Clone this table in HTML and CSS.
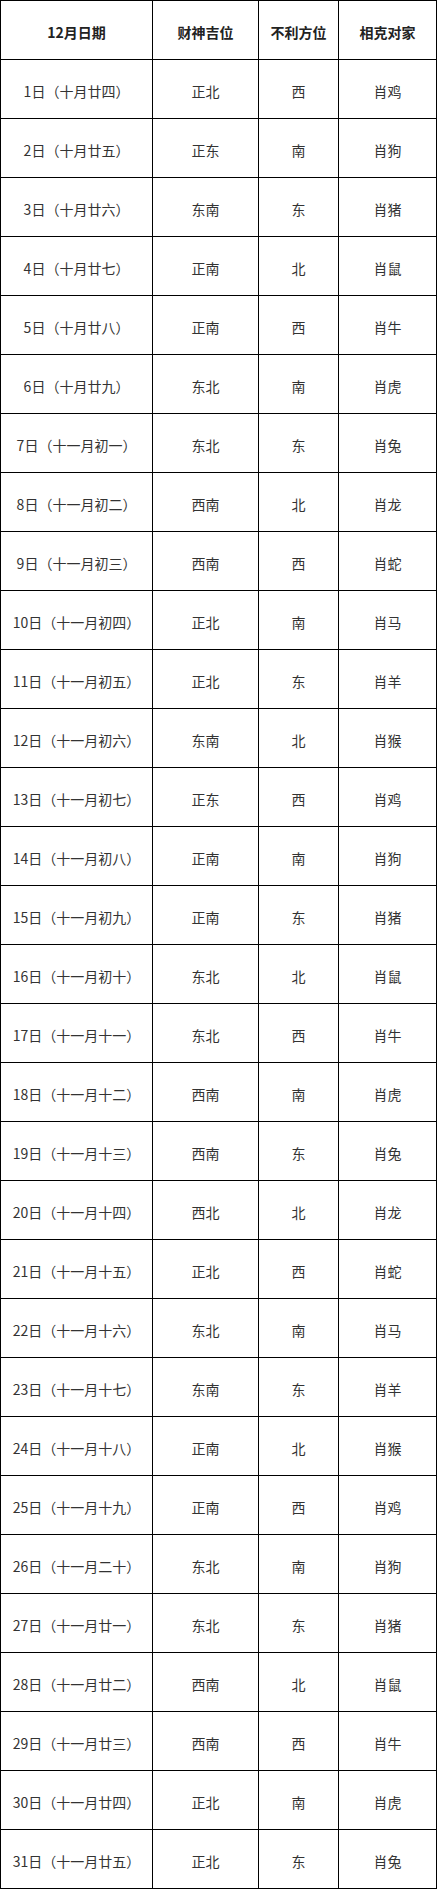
FILE: index.html
```html
<!DOCTYPE html>
<html lang="zh-CN">
<head>
<meta charset="utf-8">
<title>12月日期</title>
<link rel="stylesheet" href="styles.css">
</head>
<body>
<table class="almanac">
<colgroup>
<col class="c1"><col class="c2"><col class="c3"><col class="c4">
</colgroup>
<thead>
<tr><th>12月日期</th><th>财神吉位</th><th>不利方位</th><th>相克对家</th></tr>
</thead>
<tbody>
<tr><td>1日（十月廿四）</td><td>正北</td><td>西</td><td>肖鸡</td></tr>
<tr><td>2日（十月廿五）</td><td>正东</td><td>南</td><td>肖狗</td></tr>
<tr><td>3日（十月廿六）</td><td>东南</td><td>东</td><td>肖猪</td></tr>
<tr><td>4日（十月廿七）</td><td>正南</td><td>北</td><td>肖鼠</td></tr>
<tr><td>5日（十月廿八）</td><td>正南</td><td>西</td><td>肖牛</td></tr>
<tr><td>6日（十月廿九）</td><td>东北</td><td>南</td><td>肖虎</td></tr>
<tr><td>7日（十一月初一）</td><td>东北</td><td>东</td><td>肖兔</td></tr>
<tr><td>8日（十一月初二）</td><td>西南</td><td>北</td><td>肖龙</td></tr>
<tr><td>9日（十一月初三）</td><td>西南</td><td>西</td><td>肖蛇</td></tr>
<tr><td>10日（十一月初四）</td><td>正北</td><td>南</td><td>肖马</td></tr>
<tr><td>11日（十一月初五）</td><td>正北</td><td>东</td><td>肖羊</td></tr>
<tr><td>12日（十一月初六）</td><td>东南</td><td>北</td><td>肖猴</td></tr>
<tr><td>13日（十一月初七）</td><td>正东</td><td>西</td><td>肖鸡</td></tr>
<tr><td>14日（十一月初八）</td><td>正南</td><td>南</td><td>肖狗</td></tr>
<tr><td>15日（十一月初九）</td><td>正南</td><td>东</td><td>肖猪</td></tr>
<tr><td>16日（十一月初十）</td><td>东北</td><td>北</td><td>肖鼠</td></tr>
<tr><td>17日（十一月十一）</td><td>东北</td><td>西</td><td>肖牛</td></tr>
<tr><td>18日（十一月十二）</td><td>西南</td><td>南</td><td>肖虎</td></tr>
<tr><td>19日（十一月十三）</td><td>西南</td><td>东</td><td>肖兔</td></tr>
<tr><td>20日（十一月十四）</td><td>西北</td><td>北</td><td>肖龙</td></tr>
<tr><td>21日（十一月十五）</td><td>正北</td><td>西</td><td>肖蛇</td></tr>
<tr><td>22日（十一月十六）</td><td>东北</td><td>南</td><td>肖马</td></tr>
<tr><td>23日（十一月十七）</td><td>东南</td><td>东</td><td>肖羊</td></tr>
<tr><td>24日（十一月十八）</td><td>正南</td><td>北</td><td>肖猴</td></tr>
<tr><td>25日（十一月十九）</td><td>正南</td><td>西</td><td>肖鸡</td></tr>
<tr><td>26日（十一月二十）</td><td>东北</td><td>南</td><td>肖狗</td></tr>
<tr><td>27日（十一月廿一）</td><td>东北</td><td>东</td><td>肖猪</td></tr>
<tr><td>28日（十一月廿二）</td><td>西南</td><td>北</td><td>肖鼠</td></tr>
<tr><td>29日（十一月廿三）</td><td>西南</td><td>西</td><td>肖牛</td></tr>
<tr><td>30日（十一月廿四）</td><td>正北</td><td>南</td><td>肖虎</td></tr>
<tr><td>31日（十一月廿五）</td><td>正北</td><td>东</td><td>肖兔</td></tr>
</tbody>
</table>
</body>
</html>
```

FILE: styles.css
```css
html, body {
  margin: 0;
  padding: 0;
  background: #fff;
}

.almanac {
  border-collapse: collapse;
  table-layout: fixed;
  width: 436px;
  font-family: "Noto Sans CJK SC", "Noto Sans", sans-serif;
  font-size: 14px;
  color: #333;
}

.almanac .c1 { width: 152px; }
.almanac .c2 { width: 106px; }
.almanac .c3 { width: 80px; }
.almanac .c4 { width: 98px; }

.almanac th,
.almanac td {
  border: 1px solid #000;
  height: 59px;
  padding: 3px 0 0 0;
  box-sizing: border-box;
  text-align: center;
  vertical-align: middle;
  line-height: 20px;
  white-space: nowrap;
}

.almanac th {
  font-weight: bold;
  color: #222;
}

.almanac td {
  font-weight: normal;
}
```
